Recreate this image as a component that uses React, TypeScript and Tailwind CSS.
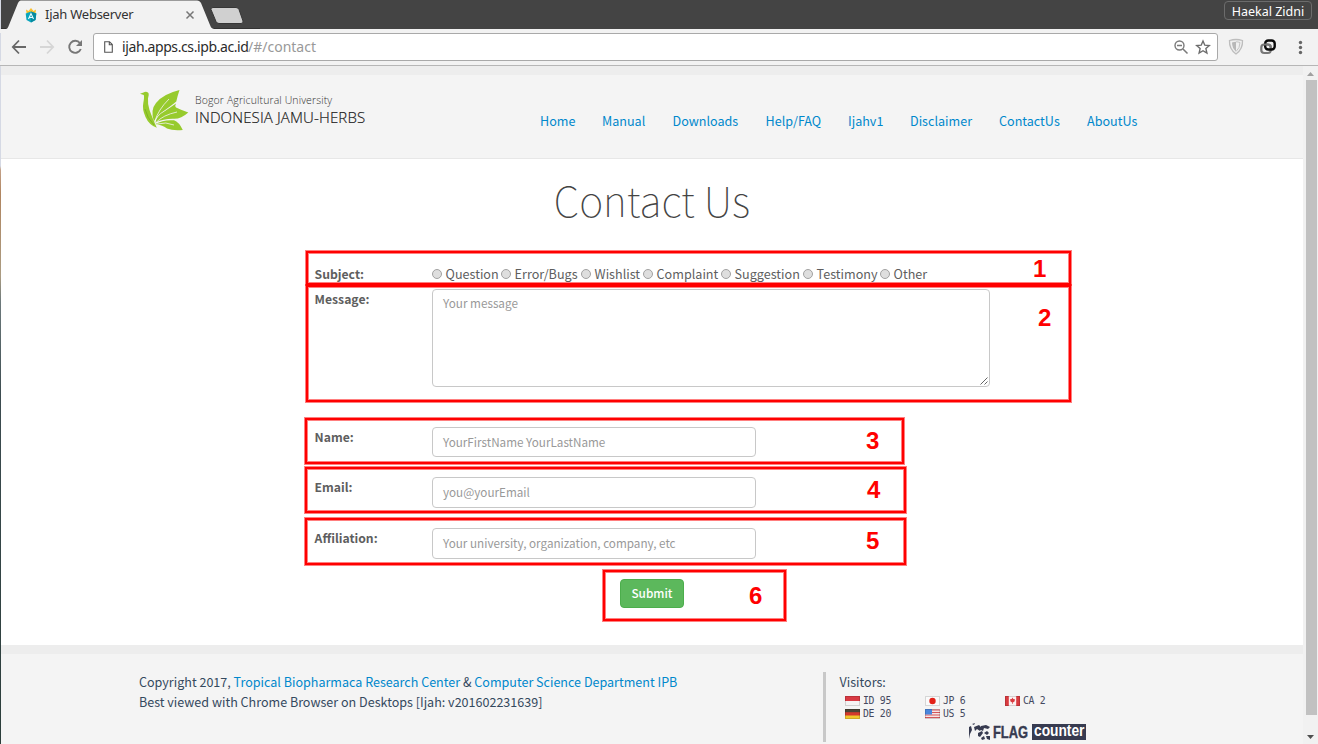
import React from "react";

const sans = "font-['Noto_Sans_CJK_SC','Liberation_Sans',sans-serif]";
const chromeFont = "font-['Noto_Sans','Open_Sans',sans-serif]";

function TabStrip() {
  return (
    <div className="relative h-[29px] shrink-0 bg-[#444444]">
      <svg className="absolute left-0 top-0" width="260" height="29" viewBox="0 0 260 29">
        <path d="M0 28.5H318" stroke="#333" />
        <path d="M6 29C8 28.500 8 27 9 25L18 3C19 1 20 .5 22 .5H197C199 .5 200 1.500 201 3L210 25C211 28 212 28.500 214 29Z" fill="#f2f2f2" />
        <path d="M213 7.500H236Q238 7.500 239 9.500L243 21Q243.500 23.500 241 23.500H219Q217 23.500 216 21.500L211 9.500Q210.500 7.500 213 7.500Z" fill="#d0d0d0" stroke="#363636" />
        <path d="M26 9.500L28.500 11L31 8L33.500 11L36 9.500L35.500 13H26.500Z" fill="#fbc02d" />
        <path d="M31 11.500L36.300 13.500L35.500 20L31 22.500L26.500 20L25.700 13.500Z" fill="#0aa5bd" />
        <path d="M31 11.500L36.300 13.500L35.500 20L31 22.500Z" fill="#078a9f" />
        <path d="M28.500 19L31 13.500L33.500 19M29.500 17.500H32.500" fill="none" stroke="#e8fbff" strokeWidth="1.100" />
        <path d="M186.500 11.500L193.500 18.500M193.500 11.500L186.500 18.500" stroke="#777" strokeWidth="1.500" />
        <path d="M.5 0V29" stroke="#d5d9e4" />
      </svg>
      <div className="relative flex h-full items-start justify-between pl-[45px] pr-[6px]">
        <span className={`${chromeFont} mt-[5px] text-[13px] leading-[18px] tracking-[-0.25px] text-[#333]`}>Ijah Webserver</span>
        <span className={`${chromeFont} mt-px h-[19px] w-[88px] rounded-[4px] border border-[#6c6c6c] text-center text-[12.500px] leading-[19px] text-white`}>Haekal Zidni</span>
      </div>
    </div>
  );
}

function Toolbar() {
  return (
    <div className="flex h-[37px] shrink-0 items-start border-b border-[#b6b6b6] bg-[#f2f2f2] pt-[4px]">
      <svg className="shrink-0" width="93" height="28" viewBox="0 33 93 28">
        <path d="M.5 33V61" stroke="#d5d9e4" />
        <path d="M26 47H13M19 40.500L12.800 47L19 53.500" fill="none" stroke="#686868" strokeWidth="1.800" />
        <path d="M40 47H53M47 40.500L53.200 47L47 53.500" fill="none" stroke="#d6d6d6" strokeWidth="1.800" />
        <path d="M80 43.200A6 6 0 1 0 80.800 49" fill="none" stroke="#777" strokeWidth="1.900" />
        <path d="M82 40V46H76Z" fill="#777" />
      </svg>
      <div className="flex h-[28px] w-[1125px] shrink-0 items-center rounded-[3px] border border-[#a9a9a9] bg-white">
        <svg className="ml-[10px] shrink-0" width="9" height="12" viewBox="0 0 9 12">
          <path d="M.7 .7H5.500L8.300 3.500V11.300H.7ZM5.300 .7V3.700H8.300" fill="none" stroke="#555" strokeWidth="1.100" />
        </svg>
        <span className={`${chromeFont} ml-[9px] text-[14px] leading-[20px] text-[#2b2b2b]`}>
          <span className="inline-block w-[126px] whitespace-nowrap tracking-[-0.4px]">ijah.apps.cs.ipb.ac.id</span>
          <span className="text-[#999]">/#/contact</span>
        </span>
        <svg className="ml-auto mr-[5px] shrink-0" width="40" height="18" viewBox="1172 38 40 18">
          <circle cx="1179.500" cy="45.500" r="4.500" fill="none" stroke="#7a7a7a" strokeWidth="1.400" />
          <path d="M1177 45.500H1182M1183 49L1187.500 53.500" stroke="#7a7a7a" strokeWidth="1.500" />
          <path d="M1203 41L1204.800 45.200L1209.300 45.600L1205.900 48.600L1206.900 53L1203 50.700L1199.100 53L1200.100 48.600L1196.700 45.600L1201.200 45.200Z" fill="none" stroke="#6c6c6c" strokeWidth="1.400" />
        </svg>
      </div>
      <svg className="shrink-0" width="100" height="28" viewBox="1218 33 100 28">
        <path d="M1229.500 40.500Q1236 38.500 1242.500 40.500Q1243 49 1236 54Q1229 49 1229.500 40.500Z" fill="#f0f0f0" stroke="#bdbdbd" strokeWidth="1.300" />
        <path d="M1232 42.500Q1234 41.800 1236 41.800V51.500Q1232 48 1232 42.500Z" fill="#b8b8b8" />
        <path d="M1236 41.800Q1238 41.800 1240 42.500Q1240 48 1236 51.500" fill="none" stroke="#c4c4c4" />
        <rect x="1261.300" y="44.500" width="9.500" height="8.500" rx="3" fill="none" stroke="#777" strokeWidth="2.200" />
        <rect x="1265.200" y="40.500" width="9.500" height="9" rx="3" fill="none" stroke="#0a0a0a" strokeWidth="2.400" />
        <path d="M1263.500 44.500H1267.500Q1270.800 44.500 1270.800 47.800" fill="none" stroke="#777" strokeWidth="2.200" />
        <g fill="#666"><circle cx="1300.500" cy="42.500" r="1.700" /><circle cx="1300.500" cy="47.500" r="1.700" /><circle cx="1300.500" cy="52.500" r="1.700" /></g>
      </svg>
    </div>
  );
}

function Bird() {
  return (
    <svg className="shrink-0" width="50" height="44" viewBox="139 88 50 44">
      <g fill="#97cb2d">
        <path d="M140 93.800L143.500 92.500Q146 90.800 148.500 93Q149.300 95 148 98.500Q147.500 104 149.500 110Q152 117 156.800 127.800Q149 125 145.500 117Q142 109 143.300 103Q144.500 97 143.800 95Z" />
        <path d="M179.500 90Q177.500 96 176.300 101.500Q171 106 161.500 112.500Q155.500 117 154 122Q150 110 156 103Q163 94 179.500 90Z" />
        <path d="M176 103.500Q174.500 106 176 107.500Q180 109.500 188.300 112.500Q181 119 174 118.800Q164 118.500 155.500 122.500Q156 116 165 111Z" />
        <path d="M155.500 124Q163 119.500 174 120.300Q179 122 182.800 130Q173 131 167 128.500Q163 125 155.500 124Z" />
      </g>
      <path d="M155 121Q158 110 169 99M156 122.500Q163 115 177 112M157 124Q166 121.500 174 125" fill="none" stroke="#f4f4f4" strokeWidth=".8" />
      <path d="M145 109Q147 118 154 125" fill="none" stroke="#73a71e" strokeWidth=".7" />
    </svg>
  );
}

const navItems = [
  { label: "Home", w: "w-[62px]" },
  { label: "Manual", w: "w-[70.500px]" },
  { label: "Downloads", w: "w-[93px]" },
  { label: "Help/FAQ", w: "w-[82.500px]" },
  { label: "Ijahv1", w: "w-[62px]" },
  { label: "Disclaimer", w: "w-[89px]" },
  { label: "ContactUs", w: "w-[88px]" },
  { label: "AboutUs", w: "w-[60px]" },
];

function Header() {
  return (
    <header className="flex h-[93px] shrink-0 items-start border-b border-t-[9px] border-b-[#e7e7e7] border-t-[#ededed] bg-[#f4f4f4] pl-[138px]">
      <div className="flex w-[401px] pt-[13px]">
        <Bird />
        <div className="ml-[6px] whitespace-nowrap pt-[4px] font-['Open_Sans',sans-serif]">
          <div className="text-[10.500px] font-light leading-[16px] tracking-[0.12px] text-[#333]">Bogor Agricultural University</div>
          <div className="text-[15px] font-light leading-[19px] tracking-[0.14px] text-[#111] [-webkit-text-stroke:0.2px_#333]">INDONESIA JAMU-HERBS</div>
        </div>
      </div>
      <nav className={`${sans} flex pt-[36px] text-[12.580px] leading-[20px] text-[#0088cc]`}>
        {navItems.map((n) => (
          <a key={n.label} className={`${n.w} whitespace-nowrap`}>{n.label}</a>
        ))}
      </nav>
    </header>
  );
}

const subjects = [
  { label: "Question", w: "w-[69px]" },
  { label: "Error/Bugs", w: "w-[80px]" },
  { label: "Wishlist", w: "w-[62px]" },
  { label: "Complaint", w: "w-[78px]" },
  { label: "Suggestion", w: "w-[82px]" },
  { label: "Testimony", w: "w-[77px]" },
  { label: "Other", w: "w-[50px]" },
];

const fields = [
  { label: "Name:", hint: "YourFirstName YourLastName", row: "h-[50px]", box: "h-[30px]" },
  { label: "Email:", hint: "you@yourEmail", row: "h-[51px]", box: "h-[31px] pb-[2px]" },
  { label: "Affiliation:", hint: "Your university, organization, company, etc", row: "h-[51px]", box: "h-[31px] pb-[2px]" },
];

function ContactForm() {
  return (
    <main className={`${sans} flex h-[486px] shrink-0 flex-col bg-white text-[12.600px] text-[#5e5e5e]`}>
      <h1 className="h-[105px] pt-[16px] text-center text-[40.900px] font-thin leading-[50px] text-[#444]">Contact Us</h1>
      <div className="flex h-[25px] pl-[313.600px] leading-[20px]">
        <b className="w-[117.400px] text-[12.200px]">Subject:</b>
        {subjects.map((s) => (
          <label key={s.label} className={`${s.w} flex gap-[3.600px] whitespace-nowrap`}>
            <span className="mt-[5px] h-[10px] w-[10px] shrink-0 rounded-full border border-[#a2a2a2] bg-[#dedede]" />
            {s.label}
          </label>
        ))}
      </div>
      <div className="flex h-[138px] pl-[313.600px] leading-[20px]">
        <b className="w-[117.400px] text-[12.200px]">Message:</b>
        <div className="relative h-[98px] w-[558px] rounded-[4px] border border-[#c8c8c8] px-[10px] pt-[3px] text-[11.720px] text-[#999]">
          Your message
          <svg className="absolute bottom-[1px] right-[1px]" width="8" height="8" viewBox="0 0 8 8">
            <path d="M.5 7.500L7.500 .5M4.500 7.500L7.500 4.500" stroke="#666" />
          </svg>
        </div>
      </div>
      {fields.map((f) => (
        <div key={f.label} className={`${f.row} flex pl-[313.600px] leading-[20px]`}>
          <b className="w-[117.400px] text-[12.200px]">{f.label}</b>
          <div className={`${f.box} flex w-[324px] items-center rounded-[4px] border border-[#c8c8c8] px-[10px] text-[11.700px] text-[#999]`}>{f.hint}</div>
        </div>
      ))}
      <button className="ml-[619px] h-[29px] w-[64px] rounded-[4px] border border-[#4cae4c] bg-[#5cb85c] pb-px text-[11.800px] font-medium leading-[20px] text-white">Submit</button>
    </main>
  );
}

function Flag({ code }: { code: string }) {
  return (
    <svg className="shrink-0" width="15" height="10" viewBox="0 0 15 10">
      {code === "ID" && <><path d="M0 0H15V10H0Z" fill="#f5f3f3" /><path d="M0 0H15V5H0Z" fill="#d93a43" /></>}
      {code === "DE" && <><path d="M0 0H15V10H0Z" fill="#f0c52c" /><path d="M0 0H15V6.500H0Z" fill="#d2382c" /><path d="M0 0H15V3.200H0Z" fill="#4a4335" /></>}
      {code === "JP" && <><path d="M0 0H15V10H0Z" fill="#fafafa" /><circle cx="7.500" cy="5" r="3.200" fill="#e32118" /></>}
      {code === "US" && <><path d="M0 0H15V10H0Z" fill="#f6e5e5" /><path d="M0 1H15M0 3.500H15M0 6H15M0 8.500H15" stroke="#d4545a" strokeWidth="1.200" /><path d="M0 0H7V5.500H0Z" fill="#4a86dc" /></>}
      {code === "CA" && <><path d="M0 0H15V10H0Z" fill="#fbf1f1" /><path d="M0 0H3.800V10H0ZM11.200 0H15V10H11.200Z" fill="#d93b40" /><path d="M7.500 1.500L8.300 3L10 3.200L9.500 5.500L7.800 6.500V8H7.200V6.500L5.500 5.500L5 3.200L6.700 3Z" fill="#d93b40" /></>}
      <path d="M.5 .5H14.500V9.500H.5Z" fill="none" stroke="#000" strokeOpacity=".14" />
    </svg>
  );
}

const counts = [["ID", "95"], ["JP", "6"], ["CA", "2"], ["DE", "20"], ["US", "5"]];

function Footer() {
  return (
    <footer className={`${sans} flex min-h-0 flex-1 border-t-[9px] border-[#ededed] bg-[#f4f4f4] pl-[138px] pt-[18px] text-[12.560px] leading-[20px] text-[#34495e]`}>
      <div className="w-[684px] whitespace-nowrap">
        <div>Copyright 2017, <a className="text-[#0088cc]">Tropical Biopharmaca Research Center</a> &amp; <a className="text-[#0088cc]">Computer Science Department IPB</a></div>
        <div>Best viewed with Chrome Browser on Desktops [Ijah: v201602231639]</div>
      </div>
      <div className="h-[70px] w-[280px] border-l-[3px] border-[#c8c8c8] pl-[13px]">
        <div className="pl-[0.500px]">Visitors:</div>
        <div className="ml-[6px] mt-[3px] grid grid-cols-[80px_80px_80px] font-['DejaVu_Sans_Mono',monospace] text-[9.800px] leading-[12.500px] tracking-[-0.3px] text-[#444960]">
          {counts.map(([code, n]) => (
            <span key={code} className="flex items-center gap-[3px] whitespace-pre"><Flag code={code} />{code} {n}</span>
          ))}
        </div>
        <div className="ml-[130px] mt-[3px] flex h-[18px] items-start font-['Liberation_Sans',sans-serif] text-[16.500px] font-bold leading-[17px] text-[#373b50]">
          <svg className="shrink-0" width="22" height="18" viewBox="0 0 22 18">
            <path d="M0 4L2 3L3 7L1 11L0 16ZM3 1L6 0L5 2ZM5 4L10 2L13 5L11 8L8 6L6 8ZM12 3L17 2L21 4L19 6L15 5L14 8L12 7ZM9 10L13 8L14 10L11 14L9 13ZM15 10L18 8L20 10L18 12ZM12 15L15 13L16 16L13 17ZM17 13L21 13L21 17L18 16Z" fill="#373b50" />
          </svg>
          <div className="ml-[2px] w-[39px]">
            <div className="w-[48px] origin-left scale-x-[0.78] pt-px [-webkit-text-stroke:0.4px_#373b50]">FLAG</div>
          </div>
          <div className="mt-px h-[16px] w-[54px] bg-[#373b50] text-white">
            <div className="ml-[1.500px] w-[63px] origin-left scale-x-[0.86] text-[16px] leading-[14px]">counter</div>
          </div>
        </div>
      </div>
    </footer>
  );
}

const marks = [
  { n: "1", box: "left-[306px] top-[251px] w-[765px] h-[34px]", num: "left-[1033px] top-[256px]" },
  { n: "2", box: "left-[306px] top-[285px] w-[765px] h-[117px]", num: "left-[1038px] top-[305px]" },
  { n: "3", box: "left-[305px] top-[418px] w-[599px] h-[46px]", num: "left-[866px] top-[428px]" },
  { n: "4", box: "left-[305px] top-[467px] w-[601px] h-[46px]", num: "left-[867px] top-[477px]" },
  { n: "5", box: "left-[305px] top-[518px] w-[601px] h-[47px]", num: "left-[866px] top-[528px]" },
  { n: "6", box: "left-[603px] top-[570px] w-[183px] h-[51px]", num: "left-[749px] top-[583px]" },
];

export default function App() {
  return (
    <div className="relative flex h-[744px] w-[1318px] flex-col overflow-hidden bg-white">
      <TabStrip />
      <Toolbar />
      <div className="flex min-h-0 flex-1">
        <div className="w-px shrink-0 bg-[linear-gradient(to_bottom,#d5d9e4_0px,#d5d9e4_100px,#c3a188_104px,#b08560_128px,#ab9c82_210px,#6d7a7c_236px,#3c4c50_330px,#2b3d3a_678px)]" />
        <div className="flex w-[1302px] flex-col">
          <Header />
          <ContactForm />
          <Footer />
        </div>
        <div className="flex w-[15px] flex-col items-center bg-[#f1f1f1]">
          <svg width="15" height="14" viewBox="0 0 15 14"><path d="M4 10L7.500 6L11 10Z" fill="#a0a0a0" /></svg>
          <div className="ml-px h-[635px] w-[11px] bg-[#c1c1c1]" />
          <svg className="mt-auto" width="15" height="14" viewBox="0 0 15 14"><path d="M4 5H11L7.500 9Z" fill="#4f4f4f" /></svg>
        </div>
      </div>
      {marks.map((m) => (
        <React.Fragment key={m.n}>
          <div className={`${m.box} pointer-events-none absolute border-2 border-[#ff0000] shadow-[0_0_0_1px_rgba(255,0,0,0.5),inset_0_0_0_1px_rgba(255,0,0,0.5)]`} />
          <span className={`${m.num} absolute font-['Liberation_Sans',sans-serif] text-[24px] font-bold leading-[26px] text-[#ff0000]`}>{m.n}</span>
        </React.Fragment>
      ))}
    </div>
  );
}
